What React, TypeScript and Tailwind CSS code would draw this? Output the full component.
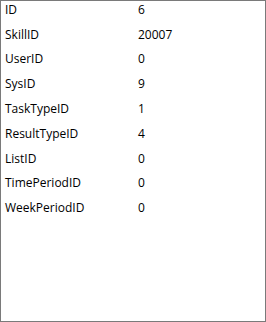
const rows: [string, string][] = [
  ["ID", "6"],
  ["SkillID", "20007"],
  ["UserID", "0"],
  ["SysID", "9"],
  ["TaskTypeID", "1"],
  ["ResultTypeID", "4"],
  ["ListID", "0"],
  ["TimePeriodID", "0"],
  ["WeekPeriodID", "0"],
];

export default function App() {
  return (
    <div
      className="w-[266px] h-[322px] overflow-hidden border border-[#7a7a7a] bg-white text-black text-[12px]"
      style={{ fontFamily: '"Segoe UI", "Open Sans", sans-serif' }}
    >
      <div className="mt-[-3.5px] flex flex-col">
        {rows.map(([name, value]) => (
          <div key={name} className="flex h-[24.8px] items-center leading-none">
            <span className="w-[137px] pl-[4px]">{name}</span>
            <span>{value}</span>
          </div>
        ))}
      </div>
    </div>
  );
}
